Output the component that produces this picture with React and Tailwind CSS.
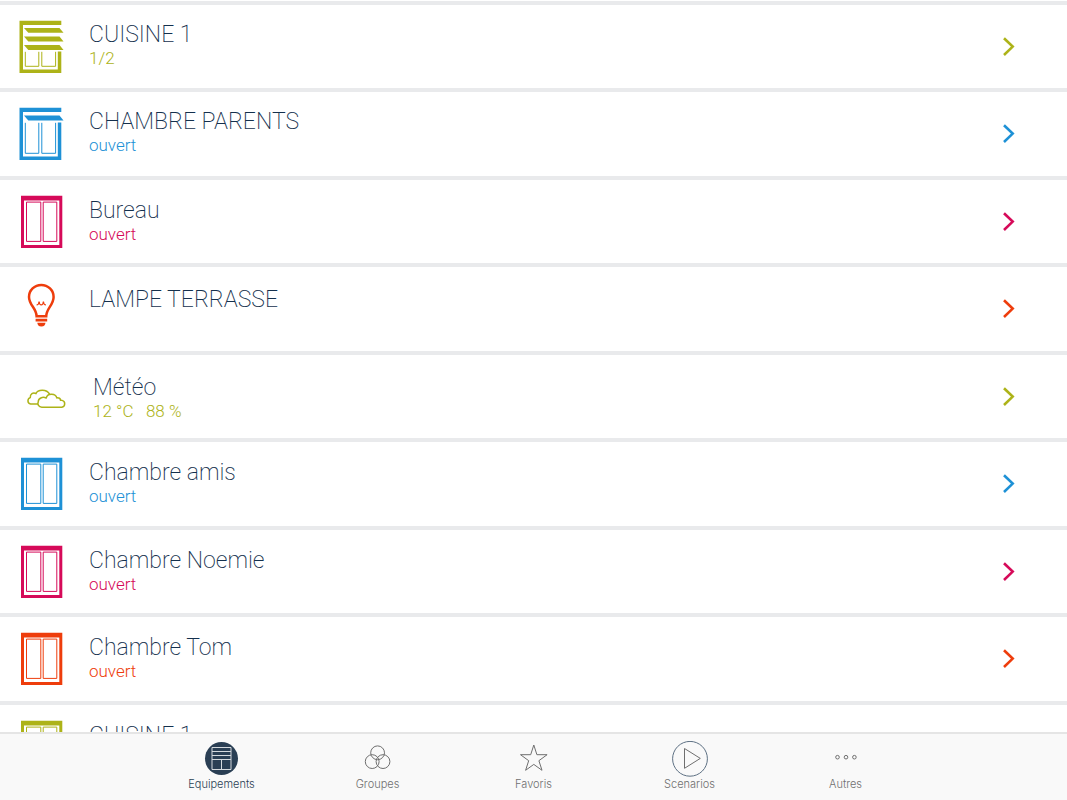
const GREEN = "text-[#adb318]";
const BLUE = "text-[#1e91d6]";
const PINK = "text-[#d60a59]";
const ORANGE = "text-[#ee3d0c]";

const DEVICES = [
  { id: 1, name: "CUISINE 1", status: "1/2", icon: ShutterHalf, color: GREEN, pad: "pt-4" },
  { id: 2, name: "CHAMBRE PARENTS", status: "ouvert", icon: ShutterOpen, color: BLUE, pad: "pt-4" },
  { id: 3, name: "Bureau", status: "ouvert", icon: WindowIcon, color: PINK },
  { id: 4, name: "LAMPE TERRASSE", status: "", icon: Bulb, color: ORANGE, pad: "pt-[19px]" },
  { id: 5, name: "Météo", status: "12 °C\u00a0\u00a0 88 %", icon: Clouds, color: GREEN, pad: "pt-[19px] pl-1" },
  { id: 6, name: "Chambre amis", status: "ouvert", icon: WindowIcon, color: BLUE },
  { id: 7, name: "Chambre Noemie", status: "ouvert", icon: WindowIcon, color: PINK },
  { id: 8, name: "Chambre Tom", status: "ouvert", icon: WindowIcon, color: ORANGE },
  { id: 9, name: "CUISINE 1", status: "ouvert", icon: WindowIcon, color: GREEN },
];

const TABS = [
  { label: "Equipements", icon: EquipmentIcon, active: true },
  { label: "Groupes", icon: GroupsIcon },
  { label: "Favoris", icon: StarIcon },
  { label: "Scenarios", icon: PlayIcon },
  { label: "Autres", icon: MoreIcon },
];

function DeviceSvg({ children }) {
  return (
    <svg viewBox="0 0 48 53" className="mt-[15px] h-[53px] w-12 shrink-0" fill="none" aria-hidden="true">
      {children}
    </svg>
  );
}

function ShutterHalf() {
  return (
    <DeviceSvg>
      <g fill="currentColor">
        <path d="M.5.8H42.3V5H4V49.5H38.8V31.5H42.3V53H.5Z" />
        <path d="M5 8H40.5L44.5 12.8H9.3Z" />
        <path d="M5 16.6H40.5L44.5 21.4H9.3Z" />
        <path d="M5 25H40.5L44.5 30H9.3Z" />
      </g>
      <path d="M6.3 31.8V46.3H19.8V31.8M22.8 31.8V46.3H36.6V31.8" stroke="currentColor" strokeWidth="1" />
    </DeviceSvg>
  );
}

function ShutterOpen() {
  return (
    <DeviceSvg>
      <g fill="currentColor">
        <path d="M.5.8H42.3V5H4V49.5H38.8V15.5H42.3V53H.5Z" />
        <path d="M5 8.4H40.5L44.5 13.4H9.3Z" />
      </g>
      <path d="M6.3 15.8V46.3H19.8V15.8M22.8 15.8V46.3H36.6V15.8" stroke="currentColor" strokeWidth="1" />
    </DeviceSvg>
  );
}

function WindowIcon() {
  return (
    <DeviceSvg>
      <path fillRule="evenodd" d="M2 .7H43.3V53H2ZM5 5.4V50H40.3V5.4Z" fill="currentColor" />
      <path d="M7.5 7.1H21.8V46.4H7.5ZM24.2 7.1H37.8V46.4H24.2Z" stroke="currentColor" strokeWidth="1" />
    </DeviceSvg>
  );
}

function Bulb() {
  return (
    <DeviceSvg>
      <path
        d="M17.6 34.2C17.6 26.5 10 23 10 14.9A12.3 12 0 0 1 34.6 14.9C34.6 23 27.2 26.5 27.2 34.2Z"
        stroke="currentColor"
        strokeWidth="2.5"
      />
      <path
        d="M17.6 22.9C18.9 22.9 19.9 21.8 20.1 19.5C20.3 21.8 21 22.9 22.2 22.9S24.2 21.8 24.4 19.5C24.6 21.8 25.6 22.9 26.9 22.9"
        stroke="currentColor"
        strokeWidth="1.2"
      />
      <path
        d="M16.6 36.8H28.2V39.6H16.6ZM18.3 40.8H26.5C26.2 43 25.3 44.6 22.4 44.6S18.6 43 18.3 40.8Z"
        fill="currentColor"
      />
    </DeviceSvg>
  );
}

function Clouds() {
  return (
    <DeviceSvg>
      <g stroke="currentColor" strokeWidth="1.5" strokeLinejoin="round">
        <path d="M18.8 34H11.6A3.3 3.3 0 0 1 11.3 27.6C11 24 14 22.2 17 23.6C18.5 19.6 27.5 18.6 30.6 24.2" />
        <path d="M22.8 37.2H42.8A3.5 3.5 0 0 0 43.2 30.4C42.8 30.2 42 30.1 41.4 30.2C41.5 28.4 40 27.6 37.8 27.9C36.8 23.4 28.6 22.6 27.2 28C23.5 26.3 19.2 28.4 19.3 31.6C18 34.3 19.8 37.2 22.8 37.2Z" />
      </g>
    </DeviceSvg>
  );
}

function Chevron() {
  return (
    <svg viewBox="0 0 12 20" className="h-5 w-3 shrink-0" fill="none" aria-hidden="true">
      <path d="M1 1.2L9.7 9.6L1 18" stroke="currentColor" strokeWidth="2.6" />
    </svg>
  );
}

function TabSvg({ children }) {
  return (
    <svg viewBox="0 0 36 36" className="h-9 w-9" fill="none" stroke="currentColor" strokeWidth="1" aria-hidden="true">
      {children}
    </svg>
  );
}

function EquipmentIcon() {
  return (
    <TabSvg>
      <circle cx="17.5" cy="17.6" r="16.5" fill="#2a3f54" stroke="none" />
      <g stroke="#d5dade">
        <path d="M8 6.5H27V28.5H8Z" />
        <path d="M8 10.5H27M8 14.5H27M8 18.5H27M17.5 18.5V28.5" />
      </g>
    </TabSvg>
  );
}

function GroupsIcon() {
  return (
    <TabSvg>
      <circle cx="17.6" cy="11.8" r="6.9" />
      <circle cx="12.2" cy="20.6" r="6.9" />
      <circle cx="23" cy="20.6" r="6.9" />
    </TabSvg>
  );
}

function StarIcon() {
  return (
    <TabSvg>
      <path d="M17.8 4L20.9 13.7H31.1L22.9 19.7L26 29.3L17.8 23.4L9.6 29.3L12.7 19.7L4.5 13.7H14.7Z" />
    </TabSvg>
  );
}

function PlayIcon() {
  return (
    <TabSvg>
      <circle cx="18" cy="17.8" r="17.4" stroke="#5d7083" />
      <path d="M12.5 7.5L28.3 17.4L12.5 27.3Z" />
    </TabSvg>
  );
}

function MoreIcon() {
  return (
    <TabSvg>
      <circle cx="9.5" cy="16.2" r="1.8" />
      <circle cx="18" cy="16.2" r="1.8" />
      <circle cx="26.4" cy="16.2" r="1.8" />
    </TabSvg>
  );
}

function DeviceRow({ device }) {
  const Icon = device.icon;
  return (
    <li className="border-t-4 border-[#e9eaec] odd:h-[87px] even:h-[88px]">
      <button type="button" className={`flex h-full w-full items-start pr-13 pl-[19px] text-left ${device.color}`}>
        <Icon />
        <span className={`ml-[22px] flex flex-1 flex-col ${device.pad ?? "pt-[17px]"}`}>
          <span className="text-[23px] leading-7 font-extralight text-[#14304d]">{device.name}</span>
          {device.status && <span className="text-[17px] leading-[18px] font-light">{device.status}</span>}
        </span>
        <span className="self-center">
          <Chevron />
        </span>
      </button>
    </li>
  );
}

export default function App() {
  return (
    <div className="flex h-screen flex-col bg-white font-['Roboto',sans-serif]">
      <main className="min-h-0 flex-1 overflow-hidden pt-px">
        <ul>
          {DEVICES.map((device) => (
            <DeviceRow key={device.id} device={device} />
          ))}
        </ul>
      </main>

      {/* Bottom tab bar */}
      <nav className="flex shrink-0 justify-center border-t-2 border-[#e5e5e5] bg-[#f9f9f9] pt-[7px] pb-[9px] font-['Inter',sans-serif]">
        {TABS.map(({ label, icon: Icon, active }) => (
          <a
            key={label}
            href="#"
            aria-current={active ? "page" : undefined}
            className={`flex w-39 flex-col items-center ${active ? "text-[#2a3f54]" : "text-[#6f6f6f]"}`}
          >
            <Icon />
            <span className="text-[11px] leading-[14px] font-light">{label}</span>
          </a>
        ))}
      </nav>
    </div>
  );
}
